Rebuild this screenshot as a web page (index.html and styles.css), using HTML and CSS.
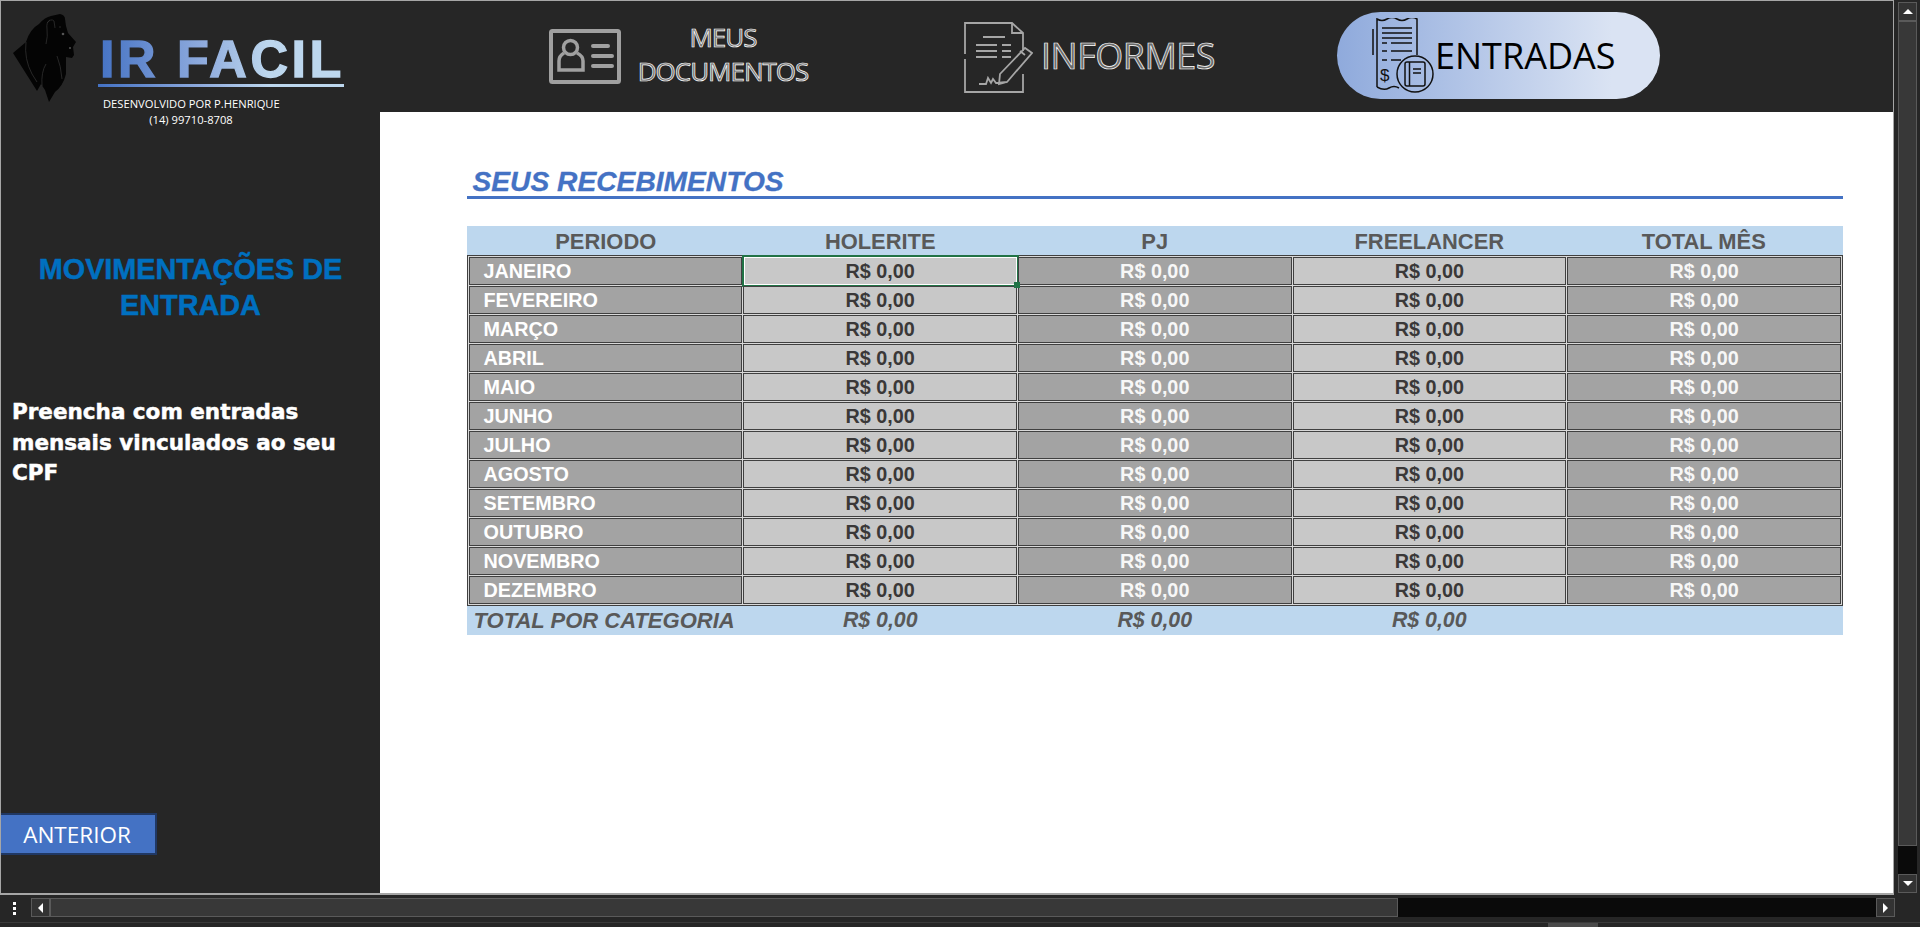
FILE: index.html
```html
<!DOCTYPE html>
<html lang="pt-BR">
<head>
<meta charset="utf-8">
<title>IR Facil</title>
<link rel="stylesheet" href="styles.css">
</head>
<body>
<div class="window">
  <div class="upper">
    <div class="sheet">
      <aside class="side">
        <div class="brand">
          <svg class="lion" viewBox="0 0 66 90" aria-hidden="true">
            <path class="lion-fill" d="M24 77 L0 39 L13 28 Q17 15 26 10 Q32 3 38 2 L47 0 Q52 1 52 5 L53 12 L55 19 L63 28 L60 33 L61 41 L59 44 L53 43 L53 60 Q50 72 42 78 L36 88 L32 76 L28 70 Z"/>
            <path class="lion-line" d="M37 6 Q33 8 34 15 Q35 22 33 30 M34 9 Q38 4 41 7 L42 14 M13 28 Q11 45 19 60 L24 68 M44 42 Q48 52 49 65 M33 50 Q28 58 29 72 M46 13 L48 13"/>
            <circle class="lion-eye" cx="50" cy="20" r="1.3"/>
            <circle class="lion-eye" cx="57" cy="34" r="1"/>
          </svg>
          <div class="brand-text">
            <div class="logo-word">IR FACIL</div>
            <div class="logo-rule"></div>
            <div class="credit">DESENVOLVIDO POR P.HENRIQUE<br>(14) 99710-8708</div>
          </div>
        </div>
        <h2 class="side-title">MOVIMENTAÇÕES DE ENTRADA</h2>
        <p class="side-text">Preencha com entradas mensais vinculados ao seu CPF</p>
        <button class="back" type="button">ANTERIOR</button>
      </aside>
      <div class="content">
        <nav class="nav">
          <a class="nav-item docs">
            <svg class="ico-card" viewBox="0 0 72 55" aria-hidden="true">
              <rect x="2" y="2" width="68" height="51" rx="1.5"/>
              <circle cx="21.5" cy="18.5" r="7"/>
              <path d="M15 24 Q10 27 10 32 V41 H34 V32 Q34 27 28 24"/>
              <path class="thick" d="M44 17 H59 M44 27 H63 M44 37 H63"/>
            </svg>
            <span class="hollow small">MEUS<br>DOCUMENTOS</span>
          </a>
          <a class="nav-item informes">
            <svg class="ico-doc" viewBox="0 0 69 71" aria-hidden="true">
              <path d="M1 32 V1 H48 L59 11 V29 M59 52 V70 H1 V37 M48 1 V11 H59"/>
              <path d="M19 15 H41 M12 23 H33 M38 23 H47 M12 29 H33 M38 29 H47 M12 35 H33 M38 35 H47"/>
              <path d="M36 52 L61 26 L68 31 L43 60 L35 62 Z M61 33 L56 29 M15 62 H22 L24 56 L27 61 L29 57 L32 61 L43 60"/>
            </svg>
            <span class="hollow large">INFORMES</span>
          </a>
          <a class="nav-item pill">
            <svg class="ico-receipt" viewBox="0 0 62 75" aria-hidden="true">
              <path d="M1 11 V37 M5 69 V1 Q10 4 15 1 T25 1 T35 1 T45 1 V37 M27 70 Q22 67 17 70 T5 69"/>
              <path d="M10 10 H40 M10 15 H40 M10 20 H40 M10 25 H15 M19 25 H40 M10 33 H15 M19 33 H40 M10 42 H15 M19 42 H29"/>
              <text class="dollar" x="8" y="63">$</text>
              <circle cx="43" cy="56" r="18"/>
              <rect x="33" y="44" width="20" height="24" rx="2"/>
              <path d="M37.500 44 V68 M41 51 H49 M41 55 H49"/>
            </svg>
            <span class="pill-label">ENTRADAS</span>
          </a>
        </nav>
        <main class="panel">
          <h1 class="panel-title">SEUS RECEBIMENTOS</h1>
          <div class="cols table-head"><span>PERIODO</span><span>HOLERITE</span><span>PJ</span><span>FREELANCER</span><span>TOTAL MÊS</span></div>
          <div class="cols table-body">
            <div class="cell label">JANEIRO</div><div class="cell light selected">R$ 0,00</div><div class="cell dark">R$ 0,00</div><div class="cell light">R$ 0,00</div><div class="cell dark">R$ 0,00</div>
            <div class="cell label">FEVEREIRO</div><div class="cell light">R$ 0,00</div><div class="cell dark">R$ 0,00</div><div class="cell light">R$ 0,00</div><div class="cell dark">R$ 0,00</div>
            <div class="cell label">MARÇO</div><div class="cell light">R$ 0,00</div><div class="cell dark">R$ 0,00</div><div class="cell light">R$ 0,00</div><div class="cell dark">R$ 0,00</div>
            <div class="cell label">ABRIL</div><div class="cell light">R$ 0,00</div><div class="cell dark">R$ 0,00</div><div class="cell light">R$ 0,00</div><div class="cell dark">R$ 0,00</div>
            <div class="cell label">MAIO</div><div class="cell light">R$ 0,00</div><div class="cell dark">R$ 0,00</div><div class="cell light">R$ 0,00</div><div class="cell dark">R$ 0,00</div>
            <div class="cell label">JUNHO</div><div class="cell light">R$ 0,00</div><div class="cell dark">R$ 0,00</div><div class="cell light">R$ 0,00</div><div class="cell dark">R$ 0,00</div>
            <div class="cell label">JULHO</div><div class="cell light">R$ 0,00</div><div class="cell dark">R$ 0,00</div><div class="cell light">R$ 0,00</div><div class="cell dark">R$ 0,00</div>
            <div class="cell label">AGOSTO</div><div class="cell light">R$ 0,00</div><div class="cell dark">R$ 0,00</div><div class="cell light">R$ 0,00</div><div class="cell dark">R$ 0,00</div>
            <div class="cell label">SETEMBRO</div><div class="cell light">R$ 0,00</div><div class="cell dark">R$ 0,00</div><div class="cell light">R$ 0,00</div><div class="cell dark">R$ 0,00</div>
            <div class="cell label">OUTUBRO</div><div class="cell light">R$ 0,00</div><div class="cell dark">R$ 0,00</div><div class="cell light">R$ 0,00</div><div class="cell dark">R$ 0,00</div>
            <div class="cell label">NOVEMBRO</div><div class="cell light">R$ 0,00</div><div class="cell dark">R$ 0,00</div><div class="cell light">R$ 0,00</div><div class="cell dark">R$ 0,00</div>
            <div class="cell label">DEZEMBRO</div><div class="cell light">R$ 0,00</div><div class="cell dark">R$ 0,00</div><div class="cell light">R$ 0,00</div><div class="cell dark">R$ 0,00</div>
          </div>
          <div class="cols table-total"><span class="total-label">TOTAL POR CATEGORIA</span><span>R$ 0,00</span><span>R$ 0,00</span><span>R$ 0,00</span><span></span></div>
        </main>
      </div>
    </div>
    <div class="vscroll">
      <div class="sb-btn"><i class="tri up"></i></div>
      <div class="sb-thumb v"></div>
      <div class="sb-track v"></div>
      <div class="sb-btn"><i class="tri down"></i></div>
    </div>
  </div>
  <div class="hscroll">
    <div class="dots"><i></i><i></i><i></i></div>
    <div class="sb-btn h"><i class="tri left"></i></div>
    <div class="sb-thumb h"></div>
    <div class="sb-track h"></div>
    <div class="sb-btn h"><i class="tri right"></i></div>
  </div>
  <div class="status"><div class="status-thumb"></div></div>
</div>
</body>
</html>
```
FILE: styles.css
```css
* { box-sizing: border-box; }
html, body { margin: 0; height: 100%; overflow: hidden; background: #262626; }
.window { width: 1920px; height: 927px; display: flex; flex-direction: column; background: #262626; }
.upper { display: flex; height: 895px; }
.sheet { width: 1894px; height: 895px; display: flex; border-top: 1px solid #a6a6a6; border-left: 1px solid #a6a6a6; border-right: 1px solid #a6a6a6; border-bottom: 2px solid #a6a6a6; }

/* sidebar */
.side { width: 379px; display: flex; flex-direction: column; font-family: "Liberation Sans", Arial, sans-serif; }
.brand { display: flex; padding: 13px 0 0 12px; height: 250px; }
.lion { width: 66px; height: 90px; flex: none; }
.lion-fill { fill: #040404; }
.lion-line { fill: none; stroke: #303030; stroke-width: 0.8; }
.lion-eye { fill: #555; }
.brand-text { margin-left: 19px; width: 250px; }
.logo-word { font: bold 52px/52px "Liberation Sans", Arial, sans-serif; letter-spacing: 3.500px; padding: 19px 0 0 2px; height: 70px; white-space: nowrap; background: linear-gradient(90deg, #4472c4 0%, #8fabdd 42%, #bdd7ee 68%, #bdd7ee 100%); -webkit-background-clip: text; background-clip: text; color: transparent; -webkit-text-stroke: 1.400px transparent; }
.logo-rule { height: 3px; width: 246px; background: linear-gradient(90deg, #4472c4 0%, #8fabdd 42%, #bdd7ee 70%); }
.credit { width: 176px; margin: 9px 0 0 5px; text-align: center; color: #fff; font: 11.200px/16px "Open Sans", sans-serif; white-space: nowrap; }
.side-title { margin: 0; padding: 0 10px; color: #0070c0; font: bold 28.800px/36px "Liberation Sans", Arial, sans-serif; text-align: center; -webkit-text-stroke: 0.5px #0070c0; }
.side-text { margin: 74px 0 0; padding: 0 0 0 11px; width: 345px; color: #fff; font: bold 21.500px/30.500px "DejaVu Sans", sans-serif; -webkit-text-stroke: 0.5px #fff; }
.back { margin-top: auto; margin-bottom: 38px; width: 156px; height: 42px; padding: 3px 2px 0 0; border: 2px solid #203864; border-left: 0; background: #4472c4; color: #fff; font: 22.500px/1 "Open Sans", sans-serif; }

/* top navigation */
.content { flex: 1; display: flex; flex-direction: column; min-width: 0; }
.nav { height: 111px; display: flex; align-items: center; padding-left: 169px; }
.nav-item { display: flex; align-items: center; font-family: "Open Sans", sans-serif; }
.ico-card { width: 72px; height: 55px; margin-top: -1px; }
.ico-card rect, .ico-card circle, .ico-card path { fill: none; stroke: #a0a0a0; stroke-width: 3.500; }
.ico-card rect { stroke-width: 4; }
.ico-card .thick { stroke-width: 4; stroke-linecap: round; }
.hollow { color: #6a6a6a; -webkit-text-stroke: 0.7px #fff; text-align: center; white-space: nowrap; }
.hollow.small { width: 172px; margin-left: 16px; font-size: 26px; letter-spacing: -1px; line-height: 34px; margin-top: -5px; }
.hollow.large { width: 175px; text-align: left; font-size: 36px; letter-spacing: -0.5px; line-height: 44px; margin-left: 8px; margin-top: -2px; }
.informes { margin-left: 155px; }
.ico-doc { width: 69px; height: 71px; margin-top: 1px; }
.ico-doc path { fill: none; stroke: #a6a6a6; stroke-width: 1.800; }
.pill { margin-left: 121px; width: 323px; height: 87px; margin-top: -2px; padding-left: 35px; border-radius: 44px; background: linear-gradient(90deg, #8faadc 0%, #dae3f3 85%); }
.ico-receipt { width: 62px; height: 75px; flex: none; margin-top: -1px; }
.ico-receipt path, .ico-receipt circle, .ico-receipt rect { fill: none; stroke: #111; stroke-width: 1.500; }
.dollar { font: 17px "Liberation Sans", Arial, sans-serif; fill: #111; }
.pill-label { margin-left: 1px; color: #000; font-size: 36px; line-height: 44px; }

/* main panel */
.panel { flex: 1; background: #fff; padding: 50px 50px 0 86.500px; font-family: "Liberation Sans", Arial, sans-serif; }
.panel-title { margin: 0 0 27px; padding: 2px 0 0 6px; height: 37px; border-bottom: 3px solid #4472c4; color: #4472c4; font: italic bold 28.200px/34px "Liberation Sans", Arial, sans-serif; -webkit-text-stroke: 0.3px #4472c4; }
.cols { display: grid; grid-template-columns: repeat(5, minmax(0, 1fr)); }
.table-head { height: 29px; padding: 0 2px; background: #bdd7ee; color: #595959; font-weight: bold; font-size: 21.900px; line-height: 31px; text-align: center; }
.table-body { grid-auto-rows: 28px; gap: 1px; padding: 1px; border: 1px solid #404040; background: #d9d9d9; font-weight: bold; font-size: 19.800px; }
.cell { border: 1px solid #404040; line-height: 27px; text-align: center; position: relative; }
.cell.label { background: #a3a3a3; color: #fff; text-align: left; padding-left: 14px; }
.cell.light { background: #c8c8c8; color: #3a3838; }
.cell.dark { background: #a3a3a3; color: #f7f7f7; }
.selected::after { content: ""; position: absolute; inset: -3px -3px -3px -2px; border: 2px solid #217346; box-shadow: inset 0 0 0 1px #fff; }
.selected::before { content: ""; position: absolute; z-index: 1; right: -4px; bottom: -4px; width: 6px; height: 6px; background: #217346; }
.table-total { height: 29px; padding: 0 2px; background: #bdd7ee; color: #595959; font-style: italic; font-weight: bold; font-size: 21.330px; line-height: 29px; text-align: center; }
.total-label { text-align: left; white-space: nowrap; padding-left: 5px; font-size: 22px; }

/* scrollbars */
.vscroll { width: 19px; margin: 2px 0 0 4px; height: 891px; display: flex; flex-direction: column; }
.sb-btn { flex: none; width: 19px; height: 19px; border: 1px solid #5a5a5a; background: #333; display: flex; align-items: center; justify-content: center; }
.sb-thumb { background: #383838; border: 1px solid #5a5a5a; }
.sb-thumb.v { height: 825px; }
.sb-track { background: #0a0a0a; flex: 1; }
.tri { width: 0; height: 0; display: block; border-style: solid; border-color: transparent; }
.tri.up { border-width: 0 5px 5px; border-bottom-color: #fff; }
.tri.down { border-width: 5px 5px 0; border-top-color: #fff; }
.tri.left { border-width: 5px 5px 5px 0; border-right-color: #fff; }
.tri.right { border-width: 5px 0 5px 5px; border-left-color: #fff; }
.hscroll { height: 19px; margin-top: 3px; display: flex; width: 1895px; }
.dots { width: 31px; padding: 4px 0 0 13px; display: flex; flex-direction: column; gap: 2px; }
.dots i { display: block; width: 3px; height: 3px; background: #fff; }
.sb-thumb.h { width: 1348px; }
.status { margin-top: 5px; height: 5px; border-top: 1px solid #3a3a3a; padding-left: 1548px; }
.status-thumb { width: 50px; height: 4px; background: #4a4a4a; }
```
